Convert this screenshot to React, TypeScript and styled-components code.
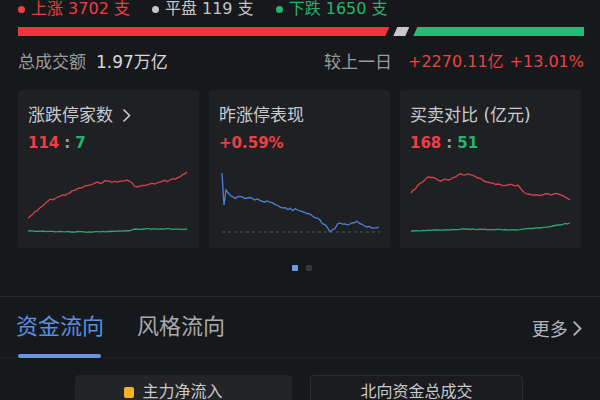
import React from "react";
import styled, { createGlobalStyle } from "styled-components";

const GlobalStyle = createGlobalStyle`
  html, body {
    margin: 0;
    padding: 0;
    background: #17181b;
  }
  body {
    font-family: "DejaVu Sans", "Noto Sans CJK SC", sans-serif;
    width: 600px;
    height: 400px;
    overflow: hidden;
  }
`;

const RED = "#ec3f44";
const GREEN = "#25b46e";
const GRAY = "#9a9b9e";

type Pt = [number, number];

// keypoints in page coordinates, smoothed with a little deterministic jitter
function buildLine(keys: Pt[], ox: number, oy: number, amp: number, seed: number): string {
  let s = seed;
  const rnd = () => {
    s = (s * 9301 + 49297) % 233280;
    return s / 233280 - 0.5;
  };
  const out: string[] = [];
  for (let i = 0; i < keys.length - 1; i++) {
    const [x1, y1] = keys[i];
    const [x2, y2] = keys[i + 1];
    const steps = Math.max(1, Math.round((x2 - x1) / 2.5));
    for (let j = 0; j < steps; j++) {
      const t = j / steps;
      const x = x1 + (x2 - x1) * t;
      const y = y1 + (y2 - y1) * t + (j === 0 ? 0 : rnd() * amp);
      out.push(`${(x - ox).toFixed(1)},${(y - oy).toFixed(1)}`);
    }
  }
  const last = keys[keys.length - 1];
  out.push(`${last[0] - ox},${last[1] - oy}`);
  return out.join(" ");
}

const CHART_TOP = 160;

const card1Red: Pt[] = [
  [28, 218], [37, 211], [48, 201], [58, 197], [67, 194], [80, 188], [93, 184],
  [107, 181], [117, 182], [127, 180], [137, 187], [147, 185], [157, 183],
  [170, 180], [180, 177], [187, 172],
];
const card1Green: Pt[] = [[28, 231], [90, 232], [128, 231], [136, 229], [187, 229]];

const card2Blue: Pt[] = [
  [222, 173], [223, 190], [224, 205], [226, 190], [229, 194], [233, 197],
  [247, 198], [267, 201], [283, 208], [300, 211], [310, 214], [320, 220],
  [330, 232], [340, 223], [350, 224], [357, 221], [367, 227], [379, 227],
];

const card3Red: Pt[] = [
  [413, 193], [420, 185], [430, 177], [440, 180], [450, 180], [460, 175],
  [470, 174], [480, 178], [490, 182], [500, 184], [510, 185], [520, 185],
  [527, 193], [540, 195], [560, 194], [567, 197], [572, 200],
];
const card3Green: Pt[] = [[413, 231], [467, 229], [517, 230], [550, 227], [572, 223]];

const Page = styled.div`
  width: 600px;
  height: 400px;
  display: flex;
  flex-direction: column;
`;

const TopSection = styled.section`
  padding: 0 16px 0 18px;
  display: flex;
  flex-direction: column;
`;

const StatRow = styled.div`
  display: flex;
  align-items: center;
  gap: 22px;
  height: 18px;
  font-size: 16px;
  line-height: 18px;
`;

const Stat = styled.span<{ $color: string }>`
  display: flex;
  align-items: center;
  color: ${(p) => p.$color};
  white-space: pre;
`;

const Dot = styled.i<{ $color: string }>`
  width: 7px;
  height: 7px;
  border-radius: 50%;
  background: ${(p) => p.$color};
  margin-right: 6px;
`;

const Bar = styled.div`
  margin-top: 9px;
  height: 9px;
  display: flex;
  gap: 4px;
`;

const BarPart = styled.div<{ $color: string; $grow: number; $left?: boolean; $right?: boolean }>`
  flex: ${(p) => p.$grow} 1 0;
  background: ${(p) => p.$color};
  clip-path: polygon(
    ${(p) => (p.$left ? "4px 0" : "0 0")},
    100% 0,
    ${(p) => (p.$right ? "calc(100% - 4px) 100%" : "100% 100%")},
    0 100%
  );
`;

const SumRow = styled.div`
  margin-top: 15px;
  height: 22px;
  display: flex;
  align-items: center;
  font-size: 17px;
  line-height: 22px;
`;

const Label = styled.span`
  color: ${GRAY};
  margin-right: 10px;
`;

const Amount = styled.span`
  color: #d6d7da;
`;

const Spacer = styled.div`
  flex: 1;
`;

const RedText = styled.span`
  color: #ea4341;
  font-size: 16px;
  margin-left: 6px;
  white-space: pre;
`;

const Cards = styled.div`
  margin-top: 17px;
  display: flex;
  gap: 10px;
`;

const Card = styled.div`
  flex: 0 0 181px;
  height: 158px;
  background: #1f2024;
  border-radius: 3px;
  box-sizing: border-box;
  padding: 14px 0 8px 0;
  display: flex;
  flex-direction: column;
`;

const CardTitle = styled.div`
  padding-left: 10px;
  font-size: 17px;
  line-height: 22px;
  color: #c9cacd;
  display: flex;
  align-items: center;
  gap: 9px;
`;

const CardValue = styled.div`
  margin-top: 7px;
  padding-left: 10px;
  font-size: 15px;
  line-height: 20px;
  font-weight: bold;
  display: flex;
  gap: 5px;
`;

const Val = styled.span<{ $color: string }>`
  color: ${(p) => p.$color};
`;

const Chart = styled.svg`
  margin-top: auto;
  display: block;
`;

const Pager = styled.div`
  margin-top: 17px;
  display: flex;
  justify-content: center;
  gap: 8px;
  padding-left: 2px;
`;

const PageDot = styled.i<{ $active?: boolean }>`
  width: 6px;
  height: 6px;
  border-radius: 1px;
  background: ${(p) => (p.$active ? "#6f98e8" : "#36373b")};
`;

const FlowSection = styled.section`
  margin-top: 25px;
  flex: 1;
  border-top: 1px solid #24272a;
  background: #16191c;
  display: flex;
  flex-direction: column;
`;

const Tabs = styled.div`
  height: 61px;
  box-sizing: border-box;
  border-bottom: 1px solid #202326;
  padding: 0 18px 0 16px;
  display: flex;
  align-items: flex-end;
  gap: 33px;
`;

const Tab = styled.div<{ $active?: boolean }>`
  font-size: 22px;
  line-height: 30px;
  color: ${(p) => (p.$active ? "#5b8fe2" : "#a9aaad")};
  padding-bottom: 15px;
  position: relative;
  &::after {
    content: "";
    display: ${(p) => (p.$active ? "block" : "none")};
    position: absolute;
    left: 2px;
    right: 3px;
    bottom: -1px;
    height: 4px;
    border-radius: 2px;
    background: #6b95e0;
  }
`;

const More = styled.div`
  margin-left: auto;
  align-self: center;
  margin-top: 2px;
  font-size: 18px;
  color: #b3b4b7;
  display: flex;
  align-items: center;
  gap: 4px;
`;

const Buttons = styled.div`
  margin-top: 17px;
  display: flex;
  justify-content: center;
  gap: 18px;
  padding-right: 2px;
`;

const FlowButton = styled.div<{ $filled?: boolean; $w: number }>`
  width: ${(p) => p.$w}px;
  height: 40px;
  box-sizing: border-box;
  border-radius: 4px;
  background: ${(p) => (p.$filled ? "#232428" : "#191b1e")};
  border: 1px solid ${(p) => (p.$filled ? "#232428" : "#2a2c30")};
  color: #c9cacd;
  font-size: 16px;
  line-height: 22px;
  display: flex;
  justify-content: center;
  padding: 5px ${(p) => (p.$filled ? "20px" : "0")} 0 0;
  gap: 8px;
`;

const Square = styled.i`
  width: 10px;
  height: 11px;
  border-radius: 2px;
  background: #f5b324;
  margin-top: 6px;
`;

function Chevron({ size, color }: { size: number; color: string }) {
  return (
    <svg width={size * 0.6} height={size} viewBox="0 0 9 15">
      <polyline points="1.5,1.5 7.5,7.5 1.5,13.5" fill="none" stroke={color} strokeWidth="1.6" />
    </svg>
  );
}

function MiniChart({ x, children }: { x: number; children: (ox: number, oy: number) => React.ReactNode }) {
  return (
    <Chart width={181} height={80} viewBox="0 0 181 80">
      {children(x, CHART_TOP)}
    </Chart>
  );
}

export default function App() {
  return (
    <Page>
      <GlobalStyle />
      <TopSection>
        <StatRow>
          <Stat $color={RED}>
            <Dot $color={RED} />
            上涨 3702 支
          </Stat>
          <Stat $color="#c4c5c8">
            <Dot $color="#c4c5c8" />
            平盘 119 支
          </Stat>
          <Stat $color={GREEN}>
            <Dot $color={GREEN} />
            下跌 1650 支
          </Stat>
        </StatRow>
        <Bar>
          <BarPart $color="#f3343f" $grow={372} $right />
          <BarPart $color="#c9c9cb" $grow={16} $left $right />
          <BarPart $color="#1fbf78" $grow={171} $left />
        </Bar>
        <SumRow>
          <Label>总成交额</Label>
          <Amount>1.97万亿</Amount>
          <Spacer />
          <Label>较上一日</Label>
          <RedText>+2270.11亿</RedText>
          <RedText>+13.01%</RedText>
        </SumRow>
        <Cards>
          <Card>
            <CardTitle>
              涨跌停家数
              <Chevron size={15} color="#c9cacd" />
            </CardTitle>
            <CardValue>
              <Val $color={RED}>114</Val>
              <Val $color="#9a9b9e">:</Val>
              <Val $color={GREEN}>7</Val>
            </CardValue>
            <MiniChart x={18}>
              {(ox, oy) => (
                <>
                  <polyline points={buildLine(card1Red, ox, oy, 2.2, 7)} fill="none" stroke="#d8434b" strokeWidth="1.3" />
                  <polyline points={buildLine(card1Green, ox, oy, 0.8, 3)} fill="none" stroke="#2ea56c" strokeWidth="1.3" />
                </>
              )}
            </MiniChart>
          </Card>
          <Card>
            <CardTitle>昨涨停表现</CardTitle>
            <CardValue>
              <Val $color={RED}>+0.59%</Val>
            </CardValue>
            <MiniChart x={209}>
              {(ox, oy) => (
                <>
                  <line x1={222 - ox} y1={232 - oy} x2={380 - ox} y2={232 - oy} stroke="#55575c" strokeWidth="1" strokeDasharray="3 3" />
                  <polyline points={buildLine(card2Blue, ox, oy, 3, 11)} fill="none" stroke="#4d80d8" strokeWidth="1.3" />
                </>
              )}
            </MiniChart>
          </Card>
          <Card>
            <CardTitle>买卖对比 (亿元)</CardTitle>
            <CardValue>
              <Val $color={RED}>168</Val>
              <Val $color="#9a9b9e">:</Val>
              <Val $color={GREEN}>51</Val>
            </CardValue>
            <MiniChart x={402}>
              {(ox, oy) => (
                <>
                  <polyline points={buildLine(card3Red, ox, oy, 2.4, 5)} fill="none" stroke="#d8434b" strokeWidth="1.3" />
                  <polyline points={buildLine(card3Green, ox, oy, 0.8, 9)} fill="none" stroke="#2ea56c" strokeWidth="1.3" />
                </>
              )}
            </MiniChart>
          </Card>
        </Cards>
        <Pager>
          <PageDot $active />
          <PageDot />
        </Pager>
      </TopSection>
      <FlowSection>
        <Tabs>
          <Tab $active>资金流向</Tab>
          <Tab>风格流向</Tab>
          <More>
            更多
            <Chevron size={17} color="#b3b4b7" />
          </More>
        </Tabs>
        <Buttons>
          <FlowButton $filled $w={217}>
            <Square />
            主力净流入
          </FlowButton>
          <FlowButton $w={213}>北向资金总成交</FlowButton>
        </Buttons>
      </FlowSection>
    </Page>
  );
}
